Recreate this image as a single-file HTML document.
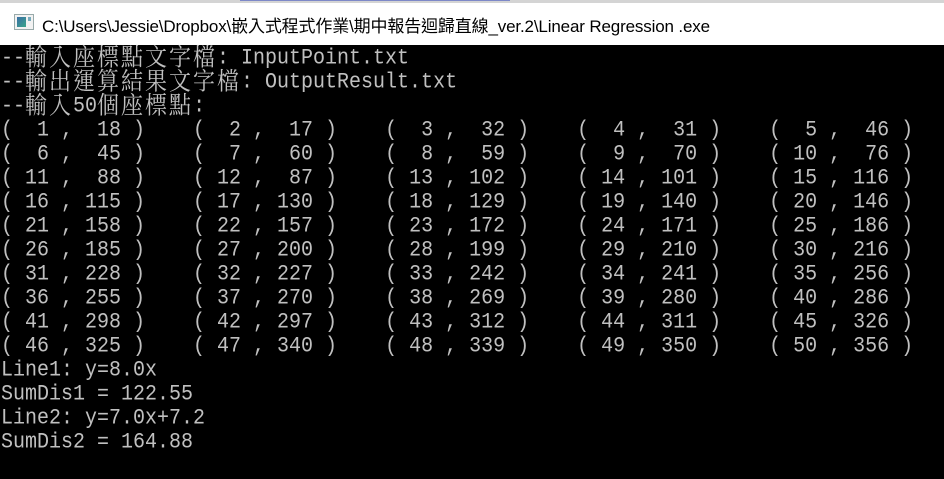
<!DOCTYPE html>
<html><head><meta charset="utf-8"><style>
html,body{margin:0;padding:0;width:944px;height:479px;overflow:hidden;background:#000}
#title{position:absolute;left:0;top:0;width:944px;height:45px;background:#fff}
#strip{position:absolute;left:0;top:0;width:944px;height:3px;background:#d4d4d4}
#strip2{position:absolute;left:240px;top:0;width:270px;height:1px;background:#7d88c8}
#icon{position:absolute;left:14px;top:14px;width:18px;height:14px;border:1px solid #9aa;background:#f2f2f2}
#icon i{position:absolute;left:2px;top:2px;width:9px;height:10px;background:linear-gradient(135deg,#3a6ea5,#3aa58a)}
#icon b{position:absolute;left:13px;top:2px;width:3px;height:4px;background:#7ab}
#tt{position:absolute;left:42px;top:12px;font:17px "Liberation Sans","Noto Sans CJK TC",sans-serif;color:#000;white-space:nowrap;letter-spacing:-0.15px}
.ln{position:absolute;left:1px;height:24px;font:20px/24px "Liberation Mono",monospace;color:#c0c0c0;white-space:pre;transform:scaleY(1.12);transform-origin:0 50%}
.c{font-family:"Noto Serif CJK TC","Noto Serif CJK SC",serif;font-size:22px;letter-spacing:2px;line-height:20px;vertical-align:-2px}
</style></head><body>
<div id="title"><div id="strip"></div><div id="strip2"></div><div id="icon"><i></i><b></b></div>
<div id="tt">C:\Users\Jessie\Dropbox\嵌入式程式作業\期中報告迴歸直線_ver.2\Linear Regression .exe</div></div>
<div class="ln" style="top:47px">--<span class="c">輸入座標點文字檔</span>: InputPoint.txt</div>
<div class="ln" style="top:71px">--<span class="c">輸出運算結果文字檔</span>: OutputResult.txt</div>
<div class="ln" style="top:95px">--<span class="c">輸入</span>50<span class="c">個座標點</span>:</div>
<div class="ln" style="top:119px">(  1 ,  18 )    (  2 ,  17 )    (  3 ,  32 )    (  4 ,  31 )    (  5 ,  46 )</div>
<div class="ln" style="top:143px">(  6 ,  45 )    (  7 ,  60 )    (  8 ,  59 )    (  9 ,  70 )    ( 10 ,  76 )</div>
<div class="ln" style="top:167px">( 11 ,  88 )    ( 12 ,  87 )    ( 13 , 102 )    ( 14 , 101 )    ( 15 , 116 )</div>
<div class="ln" style="top:191px">( 16 , 115 )    ( 17 , 130 )    ( 18 , 129 )    ( 19 , 140 )    ( 20 , 146 )</div>
<div class="ln" style="top:215px">( 21 , 158 )    ( 22 , 157 )    ( 23 , 172 )    ( 24 , 171 )    ( 25 , 186 )</div>
<div class="ln" style="top:239px">( 26 , 185 )    ( 27 , 200 )    ( 28 , 199 )    ( 29 , 210 )    ( 30 , 216 )</div>
<div class="ln" style="top:263px">( 31 , 228 )    ( 32 , 227 )    ( 33 , 242 )    ( 34 , 241 )    ( 35 , 256 )</div>
<div class="ln" style="top:287px">( 36 , 255 )    ( 37 , 270 )    ( 38 , 269 )    ( 39 , 280 )    ( 40 , 286 )</div>
<div class="ln" style="top:311px">( 41 , 298 )    ( 42 , 297 )    ( 43 , 312 )    ( 44 , 311 )    ( 45 , 326 )</div>
<div class="ln" style="top:335px">( 46 , 325 )    ( 47 , 340 )    ( 48 , 339 )    ( 49 , 350 )    ( 50 , 356 )</div>
<div class="ln" style="top:359px">Line1: y=8.0x</div>
<div class="ln" style="top:383px">SumDis1 = 122.55</div>
<div class="ln" style="top:407px">Line2: y=7.0x+7.2</div>
<div class="ln" style="top:431px">SumDis2 = 164.88</div>
</body></html>
